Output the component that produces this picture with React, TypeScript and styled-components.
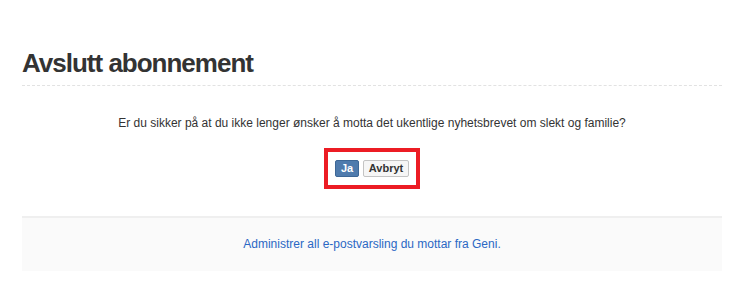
import React from 'react';
import styled, { createGlobalStyle } from 'styled-components';

const Global = createGlobalStyle`
  body {
    margin: 0;
    background: #fff;
    font-family: "Liberation Sans", Arial, sans-serif;
    color: #333;
  }
`;

const Page = styled.div`
  padding: 0 17px 0 22px;
`;

const Heading = styled.h1`
  margin: 49px 0 0;
  padding-bottom: 7px;
  font-size: 26px;
  line-height: 28.6px;
  font-weight: bold;
  letter-spacing: -1px;
  color: #333;
  border-bottom: 1px dashed #e2e2e2;
`;

const Question = styled.p`
  margin: 28px 0 0;
  font-size: 12px;
  line-height: 18px;
  text-align: center;
`;

const Actions = styled.div`
  display: flex;
  justify-content: center;
  margin-top: 16px;
`;

const Highlight = styled.div`
  display: flex;
  gap: 4px;
  padding: 8px 7px;
  border: 4px solid #ec1c24;
`;

const Button = styled.button<{ $primary?: boolean }>`
  height: 17px;
  padding: 0 4px;
  font-family: "Liberation Sans", Arial, sans-serif;
  font-size: 11px;
  font-weight: bold;
  line-height: 15px;
  border-radius: 2px;
  border: 1px solid ${p => (p.$primary ? '#3d6796' : '#c4c4c4')};
  background: ${p => (p.$primary ? '#4f7bad' : '#f6f6f6')};
  color: ${p => (p.$primary ? '#fff' : '#333')};
  min-width: ${p => (p.$primary ? '24px' : '46px')};
`;

const Footer = styled.div`
  margin-top: 27px;
  height: 53px;
  display: flex;
  align-items: center;
  justify-content: center;
  background: #fafafa;
  border-top: 2px solid #efefef;
`;

const Link = styled.a`
  font-size: 12px;
  color: #2b68c4;
  text-decoration: none;
`;

export default function App() {
  return (
    <>
      <Global />
      <Page>
        <Heading>Avslutt abonnement</Heading>
        <Question>
          Er du sikker på at du ikke lenger ønsker å motta det ukentlige nyhetsbrevet om slekt og familie?
        </Question>
        <Actions>
          <Highlight>
            <Button $primary>Ja</Button>
            <Button>Avbryt</Button>
          </Highlight>
        </Actions>
        <Footer>
          <Link href="#">Administrer all e-postvarsling du mottar fra Geni.</Link>
        </Footer>
      </Page>
    </>
  );
}
